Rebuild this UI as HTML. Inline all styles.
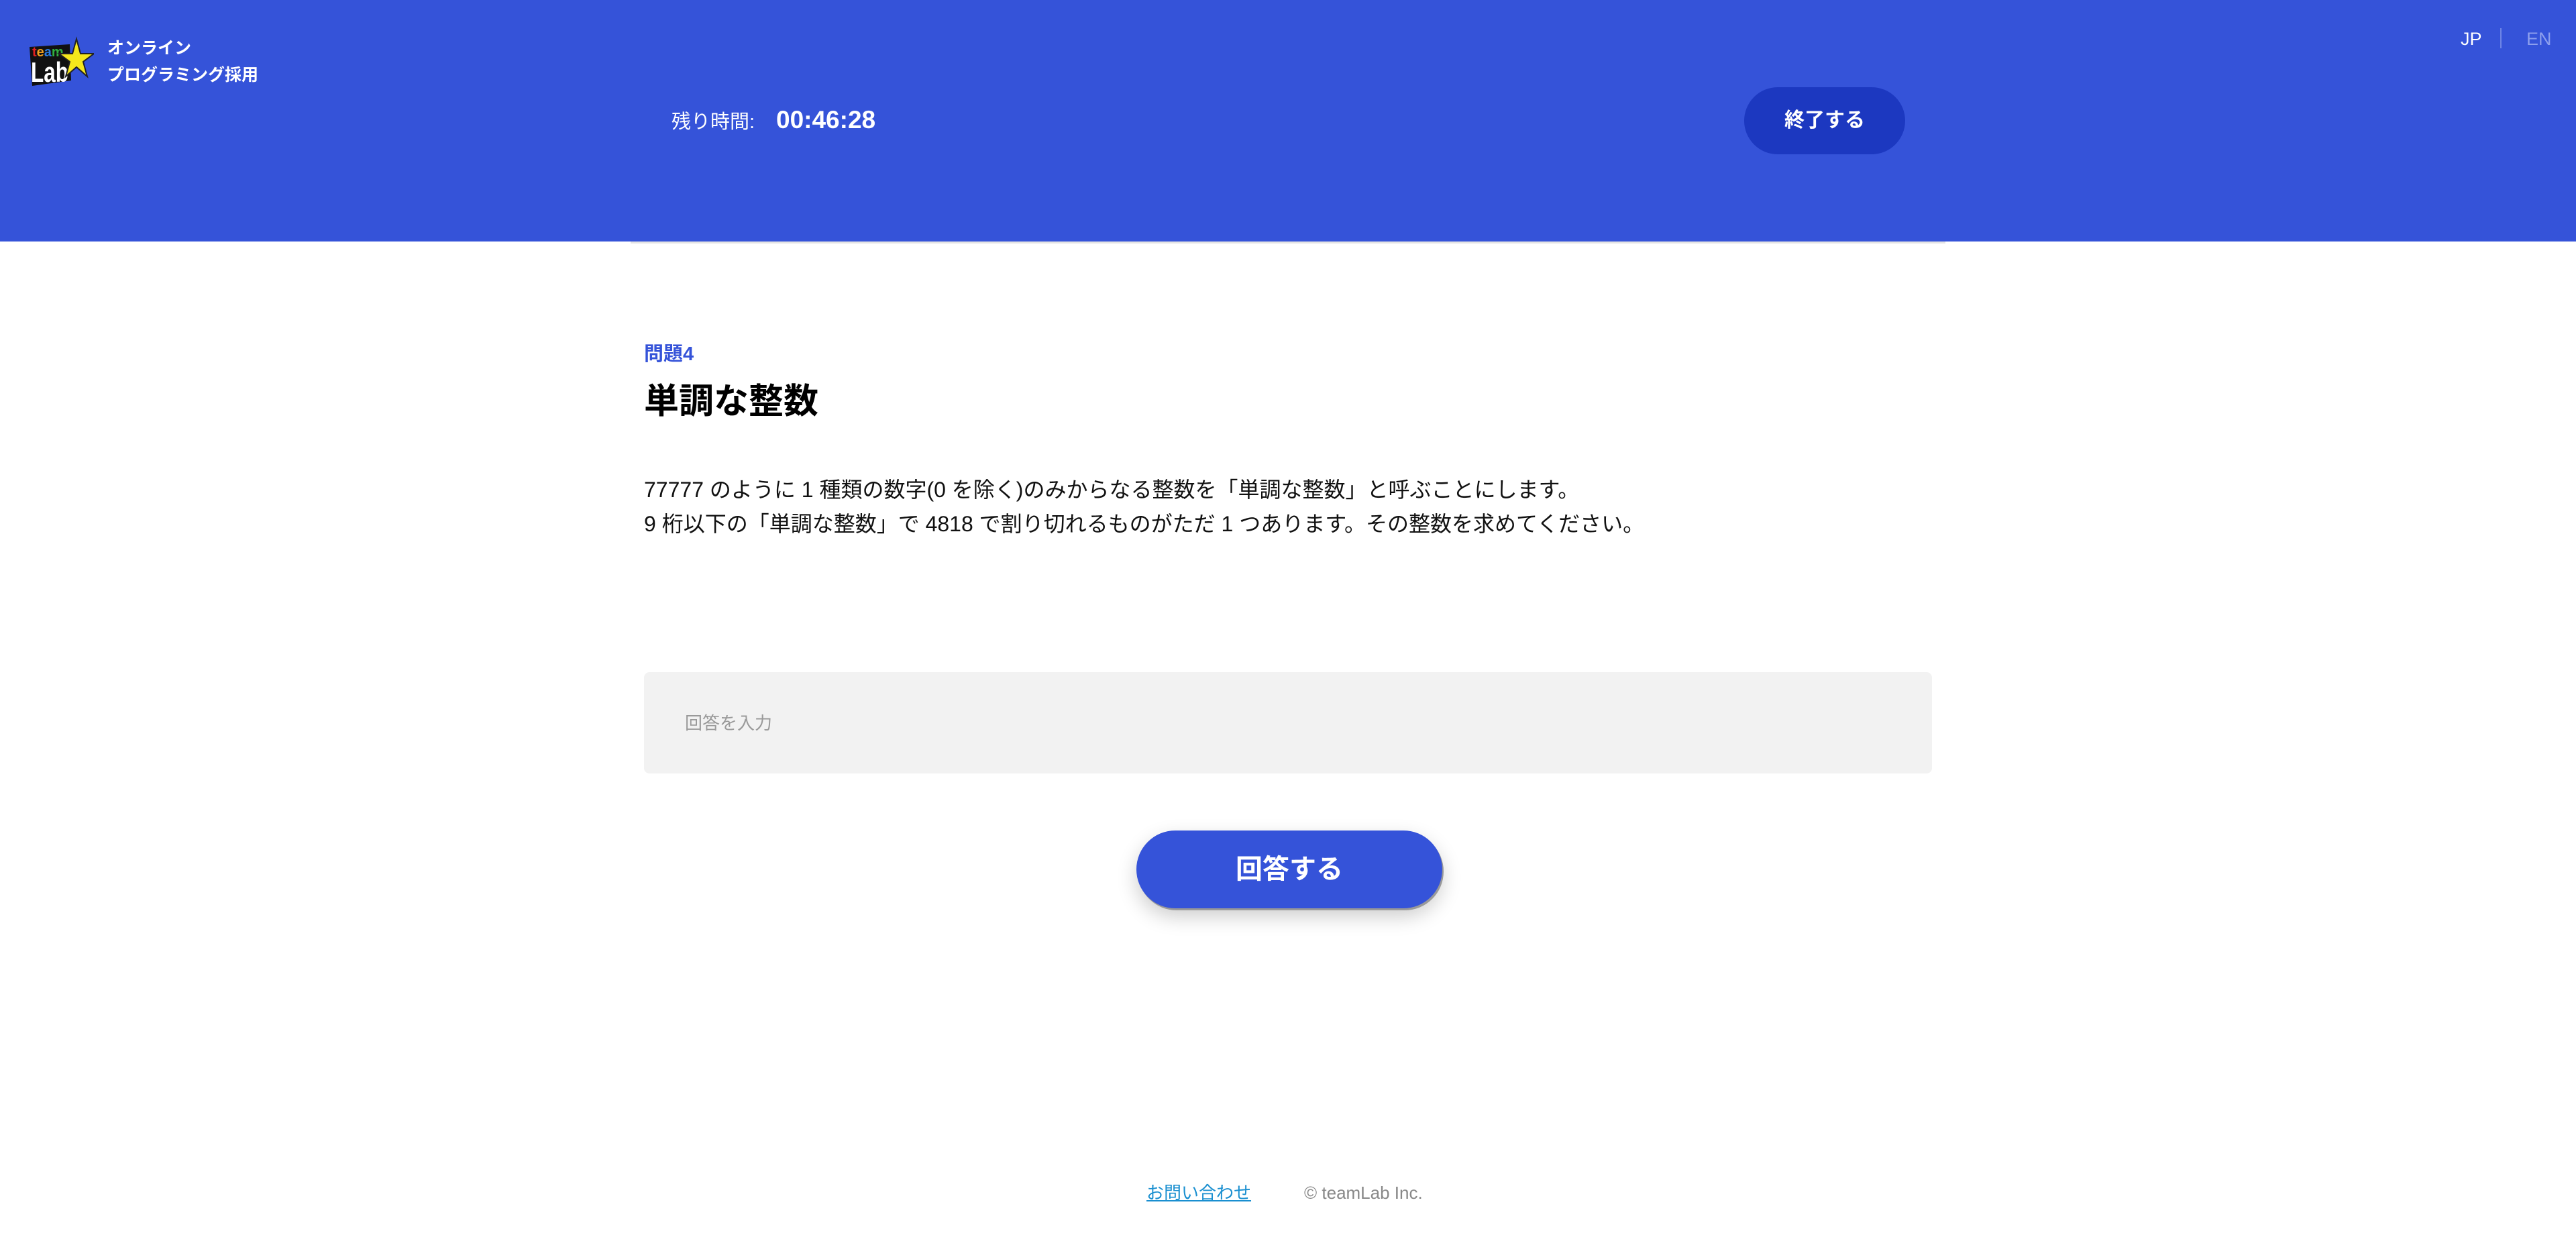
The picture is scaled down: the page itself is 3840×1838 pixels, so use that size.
<!DOCTYPE html>
<html><head><meta charset="utf-8"><style>
*{margin:0;padding:0;box-sizing:border-box}
body{width:3840px;height:1838px;background:#fff;font-family:"Liberation Sans","Noto Sans CJK JP",sans-serif;position:relative;overflow:hidden}
.hdr{position:absolute;left:0;top:0;width:3840px;height:360px;background:#3553d9}
.shadow{position:absolute;left:940px;top:360px;width:1960px;height:3px;background:#e4e4e4}
.abs{position:absolute;white-space:nowrap}
</style></head><body>
<div class="hdr"></div>
<div class="shadow"></div>
<svg class="abs" style="left:40px;top:50px" width="100" height="85" viewBox="0 0 100 85">
<polygon points="4,20 64,16 66,70 8,78" fill="#111"/>
<text x="8" y="34" font-family="Liberation Sans" font-weight="bold" font-size="20"><tspan fill="#e02020">t</tspan><tspan fill="#f0a020">e</tspan><tspan fill="#2a7be0">a</tspan><tspan fill="#30b040">m</tspan></text>
<text x="6" y="72" font-family="Liberation Sans" font-weight="bold" font-size="42" fill="#fff" textLength="56" lengthAdjust="spacingAndGlyphs">Lab</text>
<polygon points="74,8 80,30 100,30 84,42 90,64 74,50 58,64 64,42 48,30 68,30" fill="#f5e81c" stroke="#222" stroke-width="2"/>
</svg>
<div class="abs" style="left:160px;top:52px;color:#fff;font-weight:bold;font-size:25px;line-height:40px">オンライン<br>プログラミング採用</div>
<div class="abs" style="left:1001px;top:160px;color:#fff;font-size:29px;line-height:44px">残り時間:</div>
<div class="abs" style="left:1157px;top:156px;color:#fff;font-size:37px;font-weight:bold;line-height:46px">00:46:28</div>
<div class="abs" style="left:2600px;top:130px;width:240px;height:100px;border-radius:50px;background:#1c38c0;color:#fff;font-weight:bold;font-size:30px;line-height:100px;text-align:center">終了する</div>
<div class="abs" style="left:3668px;top:40px;color:#fff;font-size:27px;line-height:36px">JP</div>
<div class="abs" style="left:3727px;top:42px;width:2px;height:30px;background:#6f85e6"></div>
<div class="abs" style="left:3766px;top:40px;color:#8c9eed;font-size:27px;line-height:36px">EN</div>
<div class="abs" style="left:960px;top:508px;color:#3553d9;font-weight:bold;font-size:29px;line-height:40px">問題4</div>
<div class="abs" style="left:960px;top:566px;color:#000;font-weight:bold;font-size:52px;line-height:66px">単調な整数</div>
<div class="abs" style="left:960px;top:705px;color:#111;font-size:32px;line-height:51px">77777 のように 1 種類の数字(0 を除く)のみからなる整数を「単調な整数」と呼ぶことにします。<br>9 桁以下の「単調な整数」で 4818 で割り切れるものがただ 1 つあります。その整数を求めてください。</div>
<div class="abs" style="left:960px;top:1002px;width:1920px;height:151px;background:#f2f2f2;border-radius:8px"></div>
<div class="abs" style="left:1021px;top:1060px;color:#9a9a9a;font-size:26px;line-height:36px">回答を入力</div>
<div class="abs" style="left:1694px;top:1238px;width:456px;height:116px;border-radius:58px;background:#3553d9;color:#fff;font-weight:bold;font-size:40px;line-height:116px;text-align:center;box-shadow:2px 3px 0 #999,0 12px 30px rgba(0,0,0,0.2)">回答する</div>
<div class="abs" style="left:1709px;top:1761px;color:#1a8fd0;font-size:26px;line-height:34px;text-decoration:underline">お問い合わせ</div>
<div class="abs" style="left:1944px;top:1761px;color:#888;font-size:26px;line-height:34px">© teamLab Inc.</div>
</body></html>
